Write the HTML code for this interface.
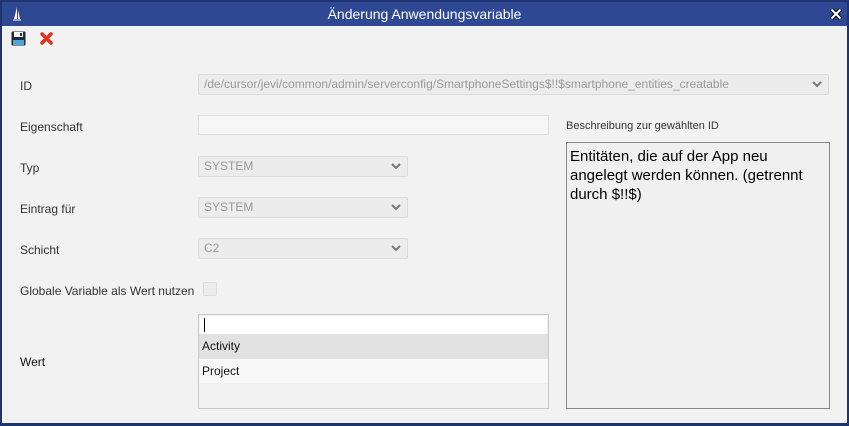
<!DOCTYPE html>
<html><head><meta charset="utf-8"><style>
*{margin:0;padding:0;box-sizing:border-box}
body{width:849px;height:426px;background:#1f336f;font-family:"Liberation Sans",sans-serif;position:relative;overflow:hidden}
.win{position:absolute;left:2px;top:2px;width:845px;height:421px;background:#f2f2f2}
.title{position:absolute;left:0;top:0;width:845px;height:24px;background:#2e4894;color:#fff;font-size:14px;text-align:center;line-height:24px}
.a{position:absolute}
.lbl{position:absolute;left:18px;font-size:12px;color:#333}
.combo{position:absolute;background:#ececec;border:1px solid #dcdcdc;border-radius:2px;font-size:12px;color:#999;padding-left:5px;line-height:18px}
.combo svg{position:absolute;right:6px;top:6px}
</style></head><body>
<div class="win">
<div class="title">Änderung Anwendungsvariable</div>
<svg class="a" style="left:10px;top:4px" width="10" height="16" viewBox="0 0 10 16"><path d="M5 1 L5 13 L2 13 Z M6 4 L8 13 L6 13Z" fill="#fff"/><path d="M1 14 L9 14" stroke="#fff"/></svg>
<svg class="a" style="left:828px;top:6px" width="12" height="12" viewBox="0 0 12 12"><path d="M1.5 1.5L10.5 10.5M10.5 1.5L1.5 10.5" stroke="#000" stroke-width="4"/><path d="M1.5 1.5L10.5 10.5M10.5 1.5L1.5 10.5" stroke="#fff" stroke-width="2"/></svg>
<svg class="a" style="left:9px;top:29px" width="15" height="15" viewBox="0 0 15 15"><rect x="0.5" y="0.5" width="14" height="14" rx="1" fill="#1d2b3a"/><rect x="3" y="1" width="9" height="5" fill="#fff"/><rect x="9" y="2" width="2" height="3" fill="#1d2b3a"/><rect x="2" y="9" width="11" height="5" fill="#4aa8d8"/></svg>
<svg class="a" style="left:38px;top:30px" width="13" height="13" viewBox="0 0 13 13"><path d="M2 2L11 11M11 2L2 11" stroke="#e8301c" stroke-width="3.5" stroke-linecap="round"/></svg>

<div class="lbl" style="top:77px">ID</div>
<div class="combo" style="left:196px;top:72px;width:631px;height:21px">/de/cursor/jevi/common/admin/serverconfig/SmartphoneSettings$!!$smartphone_entities_creatable<svg width="10" height="7" viewBox="0 0 10 7"><path d="M1 1L5 5L9 1" stroke="#777" stroke-width="2" fill="none"/></svg></div>

<div class="lbl" style="top:118px">Eigenschaft</div>
<div class="a" style="left:196px;top:113px;width:351px;height:20px;background:#f6f6f6;border:1px solid #dedede"></div>
<div class="a" style="left:564px;top:118px;font-size:11px;color:#333">Beschreibung zur gewählten ID</div>
<div class="a" style="left:564px;top:140px;width:264px;height:267px;background:#f0f0f0;border:1px solid #888;padding:4px 3px;font-size:15px;line-height:19px;color:#000">Entitäten, die auf der App neu angelegt werden können. (getrennt durch $!!$)</div>

<div class="lbl" style="top:159px">Typ</div>
<div class="combo" style="left:196px;top:154px;width:210px;height:21px">SYSTEM<svg width="10" height="7" viewBox="0 0 10 7"><path d="M1 1L5 5L9 1" stroke="#777" stroke-width="2" fill="none"/></svg></div>
<div class="lbl" style="top:200px">Eintrag für</div>
<div class="combo" style="left:196px;top:195px;width:210px;height:21px">SYSTEM<svg width="10" height="7" viewBox="0 0 10 7"><path d="M1 1L5 5L9 1" stroke="#777" stroke-width="2" fill="none"/></svg></div>
<div class="lbl" style="top:241px">Schicht</div>
<div class="combo" style="left:196px;top:236px;width:210px;height:21px">C2<svg width="10" height="7" viewBox="0 0 10 7"><path d="M1 1L5 5L9 1" stroke="#777" stroke-width="2" fill="none"/></svg></div>

<div class="lbl" style="top:282px">Globale Variable als Wert nutzen</div>
<div class="a" style="left:201px;top:280px;width:14px;height:14px;background:#ececec;border:1px solid #ddd;border-radius:2px"></div>

<div class="lbl" style="top:353px;color:#111">Wert</div>
<div class="a" style="left:196px;top:312px;width:351px;height:95px;background:#f2f2f2;border:1px solid #c8c8c8">
 <div class="a" style="left:1px;top:1px;width:347px;height:18px;background:#fff"><div class="a" style="left:4px;top:2px;width:1px;height:14px;background:#000"></div></div>
 <div class="a" style="left:0;top:19px;width:349px;height:25px;background:#e1e1e1;font-size:12px;line-height:25px;padding-left:3px;color:#111">Activity</div>
 <div class="a" style="left:0;top:44px;width:349px;height:24px;background:#f8f8f8;font-size:12px;line-height:24px;padding-left:3px;color:#111">Project</div>
</div>
</div>
</body></html>
